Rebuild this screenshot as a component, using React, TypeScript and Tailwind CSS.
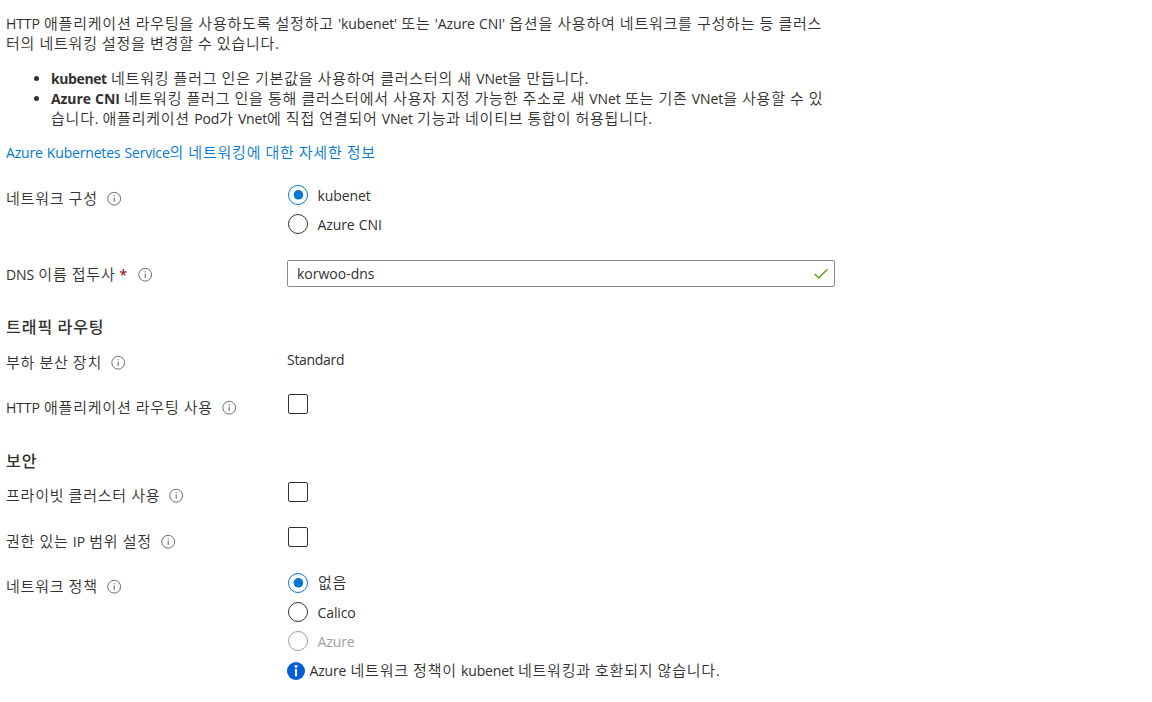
import type { ReactNode } from "react";

/* Hangul and Latin runs use different faces, weights and spacing. */
function Txt({ children, hangul = "text-[15px] font-[350] tracking-[0.78px]" }: { children: string; hangul?: string }) {
  const parts = children.split(/([\uAC00-\uD7A3]+)/);
  return (
    <>
      {parts.map((part, i) =>
        i % 2 ? (
          <span key={i} className={`font-['Noto_Sans_CJK_KR',sans-serif] ${hangul}`}>
            {part}
          </span>
        ) : (
          part
        ),
      )}
    </>
  );
}

function InfoIcon() {
  return (
    <svg className="ml-[9px] mt-px size-[15px] shrink-0" viewBox="0 0 15 15" fill="none">
      <circle cx="7.2" cy="7.7" r="6.4" stroke="#605e5c" strokeWidth="0.9" />
      <path d="M7.2 6.6v4.3M7.2 4.2v1.2" stroke="#605e5c" strokeWidth="1" />
    </svg>
  );
}

function Label({ text, required = false }: { text: string; required?: boolean }) {
  return (
    <div className="flex h-5 w-[281px] shrink-0 items-center">
      <span>
        <Txt>{text}</Txt>
        {required && <span className="ml-1 mr-0.5 font-semibold text-[#a4262c]">*</span>}
      </span>
      <InfoIcon />
    </div>
  );
}

function Row({ className, children }: { className: string; children: ReactNode }) {
  return <div className={`flex items-start ${className}`}>{children}</div>;
}

function Radio({ text, checked = false, disabled = false, lift = false }: { text: string; checked?: boolean; disabled?: boolean; lift?: boolean }) {
  const stroke = checked ? "#0078d4" : disabled ? "#a19f9d" : "#323130";
  return (
    <div className={`flex h-[22px] items-center ${disabled ? "text-[#a19f9d]" : ""}`}>
      <svg className="size-[22px] shrink-0" viewBox="0 0 22 22" fill="none">
        <circle cx="11" cy="11" r="9.5" stroke={stroke} />
        {checked && <circle cx="11.4" cy="10.8" r="4.8" fill="#0078d4" />}
      </svg>
      <span className={lift ? "mb-0.5 ml-[9px]" : "ml-[8.5px] mt-px"}>
        <Txt>{text}</Txt>
      </span>
    </div>
  );
}

function Checkbox() {
  return <div className="ml-px size-5 rounded-[2px] border border-[#323130]" />;
}

export default function App() {
  return (
    <main className="h-[702px] w-[1152px] overflow-hidden whitespace-nowrap bg-white pl-1.5 pt-[13px] font-['Open_Sans','Noto_Sans_CJK_KR',sans-serif] text-[14px] leading-5 tracking-[-0.1px] text-[#323130] [word-spacing:0.7px]">
      <div className="h-5"><Txt>HTTP 애플리케이션 라우팅을 사용하도록 설정하고 'kubenet' 또는 'Azure CNI' 옵션을 사용하여 네트워크를 구성하는 등 클러스</Txt></div>
      <div className="h-5"><Txt>터의 네트워킹 설정을 변경할 수 있습니다.</Txt></div>

      <ul className="mt-[15px] pl-[45px]">
        <li className="flex h-5 items-center">
          <span className="-ml-[17px] mr-3 size-[5px] rounded-full bg-[#323130]" />
          <span><b className="font-bold tracking-[-0.4px]">kubenet</b><Txt> 네트워킹 플러그 인은 기본값을 사용하여 클러스터의 새 VNet을 만듭니다.</Txt></span>
        </li>
        <li>
          <div className="flex h-5 items-center">
            <span className="-ml-[17px] mr-3 size-[5px] rounded-full bg-[#323130]" />
            <span><b className="font-bold tracking-[-0.1px]">Azure CNI</b><Txt> 네트워킹 플러그 인을 통해 클러스터에서 사용자 지정 가능한 주소로 새 VNet 또는 기존 VNet을 사용할 수 있</Txt></span>
          </div>
          <div className="h-5 tracking-[-0.15px]"><Txt>습니다. 애플리케이션 Pod가 Vnet에 직접 연결되어 VNet 기능과 네이티브 통합이 허용됩니다.</Txt></div>
        </li>
      </ul>

      <a className="mt-[14px] block h-5 tracking-[-0.18px] text-[#0078d4]"><Txt>Azure Kubernetes Service의 네트워킹에 대한 자세한 정보</Txt></a>

      <Row className="mt-[22px] h-[76px]">
        <div className="pt-[4px]"><Label text="네트워크 구성" /></div>
        <div className="flex flex-col gap-[7px]">
          <Radio text="kubenet" checked />
          <Radio text="Azure CNI" />
        </div>
      </Row>

      <Row className="h-[57px]">
        <div className="pt-[4px]"><Label text="DNS 이름 접두사" required /></div>
        <div className="flex h-[27px] w-[548px] items-center justify-between rounded-[2px] border border-[#8a8886] pl-[9px] pr-[6px]">
          <span className="tracking-normal">korwoo-dns</span>
          <svg className="size-[14px]" viewBox="0 0 14 14" fill="none">
            <path d="M.8 7l3.9 4 8.8-8.8" stroke="#57a300" strokeWidth="1.3" />
          </svg>
        </div>
      </Row>

      <h2 className="-mt-px h-[34px] font-medium"><Txt hangul="text-[16px] tracking-[1px]">트래픽 라우팅</Txt></h2>
      <Row className="h-[44px]">
        <div className="pt-[2px]"><Label text="부하 분산 장치" /></div>
        <span className="tracking-[-0.3px]">Standard</span>
      </Row>
      <Row className="h-[56px]">
        <div className="pt-[3px]"><Label text="HTTP 애플리케이션 라우팅 사용" /></div>
        <Checkbox />
      </Row>

      <h2 className="h-[32px] font-medium"><Txt hangul="text-[16px] tracking-[1px]">보안</Txt></h2>
      <Row className="h-[45px]">
        <div className="pt-[3px]"><Label text="프라이빗 클러스터 사용" /></div>
        <Checkbox />
      </Row>
      <Row className="h-[45px]">
        <div className="pt-[4px]"><Label text="권한 있는 IP 범위 설정" /></div>
        <Checkbox />
      </Row>
      <Row className="h-[120px]">
        <div className="pt-[4px]"><Label text="네트워크 정책" /></div>
        <div className="flex flex-col gap-[7px]">
          <Radio text="없음" checked lift />
          <Radio text="Calico" />
          <Radio text="Azure" disabled />
          <div className="flex h-[22px] items-center">
            <svg className="mt-px size-[18px] shrink-0" viewBox="0 0 18 18">
              <circle cx="9" cy="9" r="9" fill="#015cda" />
              <circle cx="9" cy="4.2" r="1.5" fill="#fff" />
              <rect x="7.9" y="6.8" width="2.2" height="7.7" rx="0.8" fill="#fff" />
            </svg>
            <span className="ml-[4.5px] tracking-[-0.15px]"><Txt>Azure 네트워크 정책이 kubenet 네트워킹과 호환되지 않습니다.</Txt></span>
          </div>
        </div>
      </Row>
    </main>
  );
}
